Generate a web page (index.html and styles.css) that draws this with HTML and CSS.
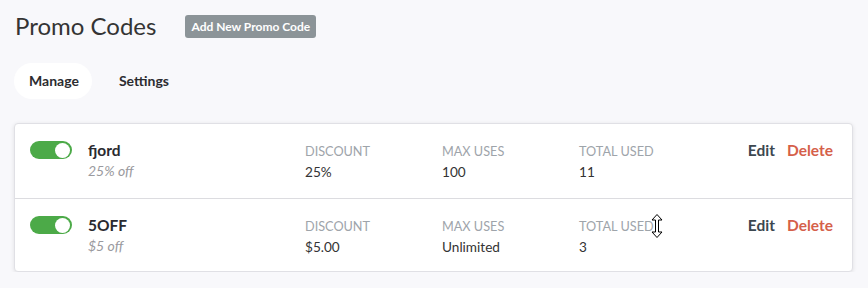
FILE: index.html
```html
<!DOCTYPE html>
<html>
<head>
<meta charset="utf-8">
<link rel="stylesheet" href="styles.css">
</head>
<body>
<div class="page">
  <div class="header">
    <h1 class="title">Promo Codes</h1>
    <button class="add-btn">Add New Promo Code</button>
  </div>
  <div class="tabs">
    <div class="tab active">Manage</div>
    <div class="tab">Settings</div>
  </div>
  <div class="card">
    <div class="row">
      <div class="toggle"><span class="knob"></span></div>
      <div class="name">
        <div class="code">fjord</div>
        <div class="desc">25% off</div>
      </div>
      <div class="stat"><div class="label">Discount</div><div class="value">25%</div></div>
      <div class="stat"><div class="label">Max Uses</div><div class="value">100</div></div>
      <div class="stat"><div class="label">Total Used</div><div class="value">11</div></div>
      <div class="actions"><span class="edit">Edit</span><span class="delete">Delete</span></div>
    </div>
    <div class="row">
      <div class="toggle"><span class="knob"></span></div>
      <div class="name">
        <div class="code">5OFF</div>
        <div class="desc">$5 off</div>
      </div>
      <div class="stat"><div class="label">Discount</div><div class="value">$5.00</div></div>
      <div class="stat"><div class="label">Max Uses</div><div class="value">Unlimited</div></div>
      <div class="stat cursor-host"><div class="label">Total Used</div><div class="value">3</div>
        <svg class="cursor" width="12" height="24" viewBox="0 0 12 24"><path d="M6 0.5 L11 6 L7.5 6 L7.5 18 L11 18 L6 23.5 L1 18 L4.5 18 L4.5 6 L1 6 Z" fill="#fff" stroke="#000" stroke-width="1"/></svg>
      </div>
      <div class="actions"><span class="edit">Edit</span><span class="delete">Delete</span></div>
    </div>
  </div>
</div>
</body>
</html>
```
FILE: styles.css
```css
html, body {
  margin: 0;
  padding: 0;
  background: #f8f8fb;
  font-family: Lato, "Noto Sans", sans-serif;
  color: #333;
}
.page {
  padding: 13px 15px 0 14px;
}
.header {
  display: flex;
  align-items: center;
  gap: 29px;
  padding-left: 1px;
}
.title {
  margin: 0;
  font-size: 24px;
  font-weight: 400;
  color: #343434;
  line-height: 26px;
}
.add-btn {
  border: 0;
  background: #8c9498;
  color: #fff;
  font-family: inherit;
  font-weight: 700;
  font-size: 12px;
  height: 23px;
  padding: 0 6px;
  border-radius: 3px;
}
.tabs {
  display: flex;
  margin-top: 24px;
}
.tab {
  font-weight: 700;
  font-size: 14px;
  color: #2c2c30;
  height: 36px;
  line-height: 36px;
  padding: 0 13px 0 15px;
  border-radius: 18px;
}
.tab.active {
  background: #fff;
  margin-right: 12px;
}
.card {
  margin-top: 24px;
  background: #fff;
  border: 1px solid #e0e0e5;
  border-radius: 4px;
  box-shadow: 0 1px 4px rgba(0,0,0,0.1);
  width: 837px;
}
.row {
  display: flex;
  align-items: flex-start;
  height: 74px;
  padding: 17px 19px 0 15px;
  box-sizing: border-box;
}
.row + .row {
  height: 73px;
  border-top: 1px solid #dcdce0;
}
.toggle {
  width: 42px;
  height: 18px;
  border-radius: 9px;
  background: #4caa48;
  position: relative;
  flex: none;
}
.knob {
  position: absolute;
  right: 2px;
  top: 1.5px;
  width: 15px;
  height: 15px;
  border-radius: 50%;
  background: #fff;
}
.name {
  width: 217px;
  margin-left: 16px;
  flex: none;
}
.code {
  font-weight: 700;
  font-size: 15.5px;
  line-height: 18px;
  color: #2a2a30;
}
.desc {
  font-style: italic;
  font-size: 14px;
  color: #9a9a9e;
  margin-top: 3px;
}
.stat {
  width: 137px;
  flex: none;
  padding-top: 3px;
}
.cursor-host { position: relative; }
.cursor {
  position: absolute;
  left: 72px;
  top: -2px;
}
.label {
  text-transform: uppercase;
  font-size: 12.7px;
  color: #9ea4aa;
  line-height: 14px;
}
.value {
  font-size: 13.6px;
  color: #333;
  margin-top: 6px;
}
.actions {
  margin-left: auto;
  display: flex;
  gap: 12px;
  font-weight: 700;
  font-size: 15.5px;
  line-height: 18px;
}
.edit { color: #3c4750; }
.delete { color: #d5604a; }
```
